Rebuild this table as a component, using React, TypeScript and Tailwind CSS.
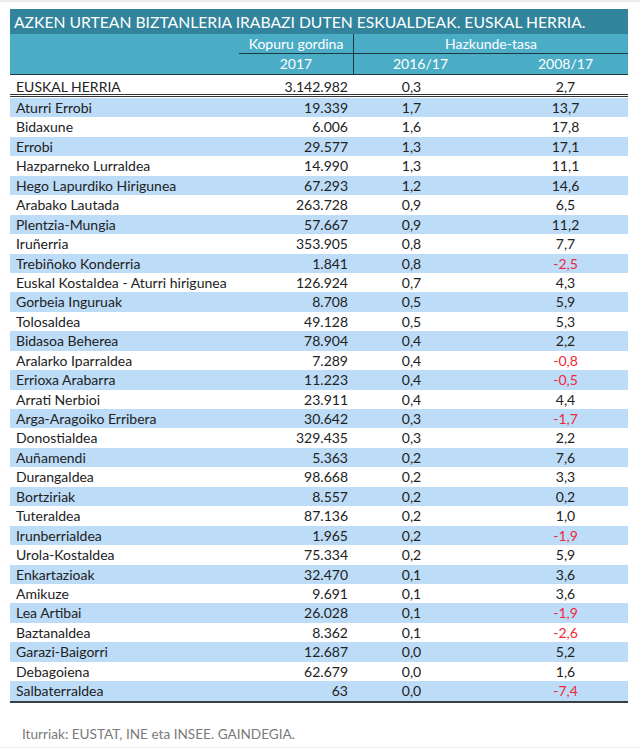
const rows: [string, string, string, string][] = [
  ['Aturri Errobi', '19.339', '1,7', '13,7'],
  ['Bidaxune', '6.006', '1,6', '17,8'],
  ['Errobi', '29.577', '1,3', '17,1'],
  ['Hazparneko Lurraldea', '14.990', '1,3', '11,1'],
  ['Hego Lapurdiko Hirigunea', '67.293', '1,2', '14,6'],
  ['Arabako Lautada', '263.728', '0,9', '6,5'],
  ['Plentzia-Mungia', '57.667', '0,9', '11,2'],
  ['Iruñerria', '353.905', '0,8', '7,7'],
  ['Trebiñoko Konderria', '1.841', '0,8', '-2,5'],
  ['Euskal Kostaldea - Aturri hirigunea', '126.924', '0,7', '4,3'],
  ['Gorbeia Inguruak', '8.708', '0,5', '5,9'],
  ['Tolosaldea', '49.128', '0,5', '5,3'],
  ['Bidasoa Beherea', '78.904', '0,4', '2,2'],
  ['Aralarko Iparraldea', '7.289', '0,4', '-0,8'],
  ['Errioxa Arabarra', '11.223', '0,4', '-0,5'],
  ['Arrati Nerbioi', '23.911', '0,4', '4,4'],
  ['Arga-Aragoiko Erribera', '30.642', '0,3', '-1,7'],
  ['Donostialdea', '329.435', '0,3', '2,2'],
  ['Auñamendi', '5.363', '0,2', '7,6'],
  ['Durangaldea', '98.668', '0,2', '3,3'],
  ['Bortziriak', '8.557', '0,2', '0,2'],
  ['Tuteraldea', '87.136', '0,2', '1,0'],
  ['Irunberrialdea', '1.965', '0,2', '-1,9'],
  ['Urola-Kostaldea', '75.334', '0,2', '5,9'],
  ['Enkartazioak', '32.470', '0,1', '3,6'],
  ['Amikuze', '9.691', '0,1', '3,6'],
  ['Lea Artibai', '26.028', '0,1', '-1,9'],
  ['Baztanaldea', '8.362', '0,1', '-2,6'],
  ['Garazi-Baigorri', '12.687', '0,0', '5,2'],
  ['Debagoiena', '62.679', '0,0', '1,6'],
  ['Salbaterraldea', '63', '0,0', '-7,4'],
];

const cols = 'grid grid-cols-[229px_115px_133px_141px]';

export default function App() {
  return (
    <div className="w-[640px] h-[748px] bg-white border-t-2 border-b border-[#ececec] font-['Lato',sans-serif] text-[#222] overflow-hidden">
      <div className="mx-[10px] mt-[7px] w-[618px]">
        <div className="h-[25px] bg-[#31849b] text-white text-[15.7px] leading-[26px] pl-[4px] whitespace-nowrap">
          AZKEN URTEAN BIZTANLERIA IRABAZI DUTEN ESKUALDEAK. EUSKAL HERRIA.
        </div>
        <div className={`${cols} bg-[#4bacc6] text-white text-[14px] border-b border-[#1d3a44]`}>
          <div className="h-[20px]" />
          <div className="h-[20px] leading-[20px] text-center border-b border-r border-[#1d3a44]">Kopuru gordina</div>
          <div className="col-span-2 h-[20px] leading-[20px] text-center border-b border-[#1d3a44]">Hazkunde-tasa</div>
          <div className="h-[20px]" />
          <div className="h-[20px] leading-[20px] text-center border-r border-[#1d3a44]">2017</div>
          <div className="h-[20px] leading-[20px] text-center">2016/17</div>
          <div className="h-[20px] leading-[20px] text-center pl-[16px]">2008/17</div>
        </div>
        <div className={`${cols} h-[22px] leading-[23px] text-[14px] border-b-[3px] border-double border-[#333]`}>
          <div className="pl-[6px]">EUSKAL HERRIA</div>
          <div className="text-right pr-[6px]">3.142.982</div>
          <div className="text-center pr-[18px]">0,3</div>
          <div className="text-center pl-[16px]">2,7</div>
        </div>
        <div className="mt-[1px] border-b-2 border-[#3a3f44]">
          {rows.map(([name, total, a, b], i) => (
            <div
              key={name}
              className={`${cols} h-[19.45px] leading-[20px] text-[14px] ${i % 2 === 0 ? 'bg-[#bcdcf7]' : 'bg-white'}`}
            >
              <div className="pl-[6px] whitespace-nowrap">{name}</div>
              <div className="text-right pr-[6px]">{total}</div>
              <div className="text-center pr-[18px]">{a}</div>
              <div className={`text-center pl-[16px] ${b.startsWith('-') ? 'text-[#ee2a3a]' : ''}`}>{b}</div>
            </div>
          ))}
        </div>
        <div className="mt-[21px] pl-[12px] text-[13.6px] text-[#7a7a7a]">Iturriak: EUSTAT, INE eta INSEE. GAINDEGIA.</div>
      </div>
    </div>
  );
}
